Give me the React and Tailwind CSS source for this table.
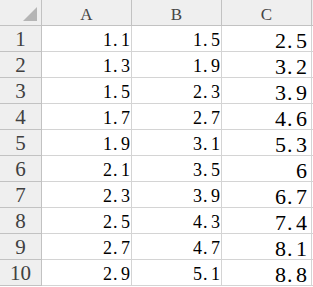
const rows = [
  ["1.1", "1.5", "2.5"],
  ["1.3", "1.9", "3.2"],
  ["1.5", "2.3", "3.9"],
  ["1.7", "2.7", "4.6"],
  ["1.9", "3.1", "5.3"],
  ["2.1", "3.5", "6"],
  ["2.3", "3.9", "6.7"],
  ["2.5", "4.3", "7.4"],
  ["2.7", "4.7", "8.1"],
  ["2.9", "5.1", "8.8"],
]

const serif = { fontFamily: '"Liberation Serif", "Times New Roman", serif' }

function Num({ value, big }) {
  return (
    <span className="flex">
      {value.split("").map((ch, i) => {
        const dot = ch === "."
        if (big) {
          return (
            <span
              key={i}
              className={
                dot
                  ? "inline-block w-[10px] pl-[1px] text-left text-[22px] leading-none"
                  : "inline-block w-[11px] text-center text-[22px] leading-none"
              }
            >
              {ch}
            </span>
          )
        }
        return (
          <span
            key={i}
            className={
              dot
                ? "inline-block w-[9px] pl-[1px] text-left text-[18px] leading-none"
                : "inline-block w-[9px] text-center text-[18px] leading-none"
            }
          >
            {ch}
          </span>
        )
      })}
    </span>
  )
}

export default function App() {
  return (
    <div className="h-[287px] w-[313px] overflow-hidden bg-white text-black" style={serif}>
      {/* column headers */}
      <div className="flex h-[26px]">
        <div className="flex h-[26px] w-[42px] shrink-0 items-end justify-end border-b border-r border-[#c2c2c2] bg-[#efefef] pb-[4px] pr-[4px]">
          <svg width="14" height="14" viewBox="0 0 14 14">
            <polygon points="0,14 14,14 14,0" fill="#b5b5b5" />
          </svg>
        </div>
        {["A", "B", "C"].map((c) => (
          <div
            key={c}
            className="flex h-[26px] w-[90px] shrink-0 items-end justify-center border-b border-r border-[#c2c2c2] bg-[#efefef] pb-[2px] text-[17px] leading-none text-[#454545]"
          >
            {c}
          </div>
        ))}
        <div className="h-[26px] flex-1 border-b border-[#c2c2c2] bg-[#efefef]" />
      </div>

      {rows.map((r, idx) => (
        <div key={idx} className="flex h-[26px]">
          <div className="flex h-[26px] w-[42px] shrink-0 items-end justify-center border-b border-r border-[#c2c2c2] bg-[#efefef] pb-[1px] text-[21px] leading-none text-[#404040]">
            {idx + 1}
          </div>
          <div className="flex h-[26px] w-[90px] shrink-0 items-end justify-end border-b border-r border-[#d4d4d4] pb-[2px] pr-[1px]">
            <Num value={r[0]} />
          </div>
          <div className="flex h-[26px] w-[90px] shrink-0 items-end justify-end border-b border-r border-[#d4d4d4] pb-[2px] pr-[1px]">
            <Num value={r[1]} />
          </div>
          <div className="flex h-[26px] w-[90px] shrink-0 items-end justify-end border-b border-r border-[#d4d4d4] pr-[4px]">
            <span className="mb-[-1px]">
              <Num value={r[2]} big />
            </span>
          </div>
          <div className="h-[26px] flex-1 border-b border-[#d4d4d4]" />
        </div>
      ))}
    </div>
  )
}
